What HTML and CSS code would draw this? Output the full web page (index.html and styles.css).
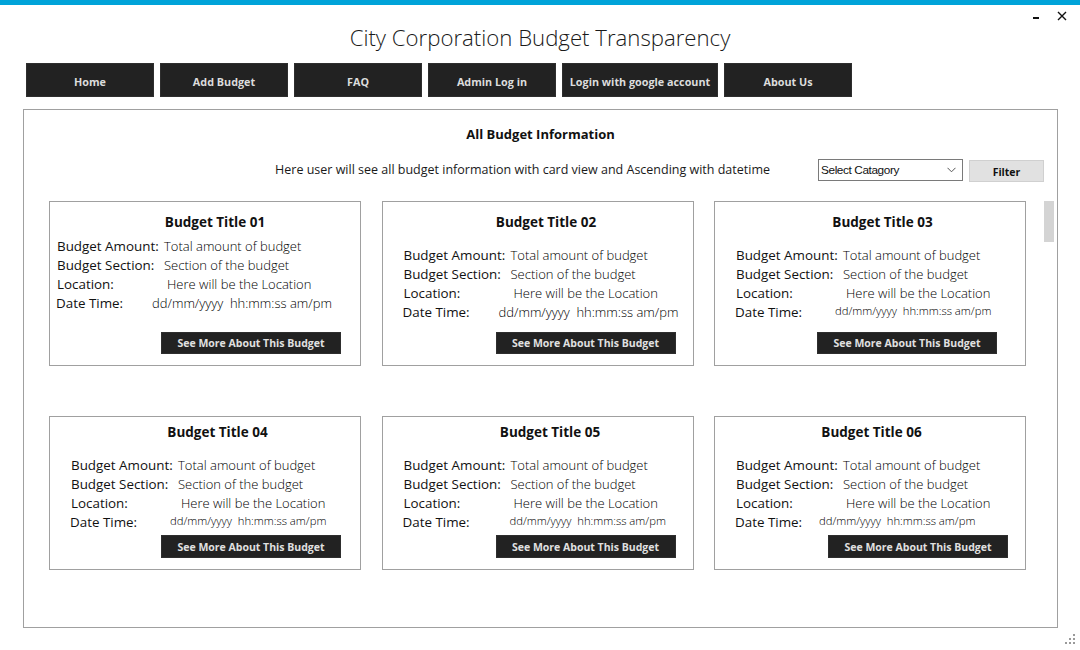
FILE: index.html
```html
<!DOCTYPE html>
<html lang="en">
<head>
<meta charset="utf-8">
<title>City Corporation Budget Transparency</title>
<link rel="stylesheet" href="styles.css">
</head>
<body>
<div class="topbar"></div>
<div class="window-controls">
  <svg class="ctl-min" width="6" height="3" viewBox="0 0 6 3"><rect x="0" y="0" width="6" height="2" fill="#111"/></svg>
  <svg class="ctl-close" width="10" height="10" viewBox="0 0 10 10"><path d="M1 1 L9 9 M9 1 L1 9" stroke="#111" stroke-width="1.4" fill="none"/></svg>
</div>

<header class="app-title">City Corporation Budget Transparency</header>

<nav class="nav">
  <a class="nav-btn">Home</a>
  <a class="nav-btn">Add Budget</a>
  <a class="nav-btn">FAQ</a>
  <a class="nav-btn">Admin Log in</a>
  <a class="nav-btn nav-btn--wide">Login with google account</a>
  <a class="nav-btn">About Us</a>
</nav>

<main class="panel">
  <h2 class="panel-title">All Budget Information</h2>
  <div class="toolbar">
    <p class="toolbar-text">Here user will see all budget information with card view and Ascending with datetime</p>
    <div class="select">
      <span>Select Catagory</span>
      <svg width="9" height="6" viewBox="0 0 9 6"><path d="M0.5 0.8 L4.5 4.8 L8.5 0.8" stroke="#555" stroke-width="1" fill="none"/></svg>
    </div>
    <button class="filter-btn">Filter</button>
  </div>

  <div class="content">
    <div class="cards">
      <section class="card card--1">
        <h3 class="card-title">Budget Title 01</h3>
        <div class="fields">
          <div class="row"><span class="lbl">Budget Amount:</span><span class="val">Total amount of budget</span></div>
          <div class="row"><span class="lbl">Budget Section:</span><span class="val">Section of the budget</span></div>
          <div class="row"><span class="lbl">Location:</span><span class="val val--loc">Here will be the Location</span></div>
          <div class="row"><span class="lbl lbl--d96">Date Time:</span><span class="val">dd/mm/yyyy&nbsp; hh:mm:ss am/pm</span></div>
        </div>
        <button class="more-btn">See More About This Budget</button>
      </section>

      <section class="card card--2">
        <h3 class="card-title">Budget Title 02</h3>
        <div class="fields">
          <div class="row"><span class="lbl">Budget Amount:</span><span class="val">Total amount of budget</span></div>
          <div class="row"><span class="lbl">Budget Section:</span><span class="val">Section of the budget</span></div>
          <div class="row"><span class="lbl">Location:</span><span class="val val--loc">Here will be the Location</span></div>
          <div class="row"><span class="lbl lbl--d96">Date Time:</span><span class="val">dd/mm/yyyy&nbsp; hh:mm:ss am/pm</span></div>
        </div>
        <button class="more-btn">See More About This Budget</button>
      </section>

      <section class="card card--3">
        <h3 class="card-title">Budget Title 03</h3>
        <div class="fields">
          <div class="row"><span class="lbl">Budget Amount:</span><span class="val">Total amount of budget</span></div>
          <div class="row"><span class="lbl">Budget Section:</span><span class="val">Section of the budget</span></div>
          <div class="row"><span class="lbl">Location:</span><span class="val val--loc">Here will be the Location</span></div>
          <div class="row"><span class="lbl lbl--d100">Date Time:</span><span class="val val--small">dd/mm/yyyy&nbsp; hh:mm:ss am/pm</span></div>
        </div>
        <button class="more-btn">See More About This Budget</button>
      </section>

      <section class="card card--4">
        <h3 class="card-title">Budget Title 04</h3>
        <div class="fields">
          <div class="row"><span class="lbl">Budget Amount:</span><span class="val">Total amount of budget</span></div>
          <div class="row"><span class="lbl">Budget Section:</span><span class="val">Section of the budget</span></div>
          <div class="row"><span class="lbl">Location:</span><span class="val val--loc">Here will be the Location</span></div>
          <div class="row"><span class="lbl lbl--d100">Date Time:</span><span class="val val--small">dd/mm/yyyy&nbsp; hh:mm:ss am/pm</span></div>
        </div>
        <button class="more-btn">See More About This Budget</button>
      </section>

      <section class="card card--5">
        <h3 class="card-title">Budget Title 05</h3>
        <div class="fields">
          <div class="row"><span class="lbl">Budget Amount:</span><span class="val">Total amount of budget</span></div>
          <div class="row"><span class="lbl">Budget Section:</span><span class="val">Section of the budget</span></div>
          <div class="row"><span class="lbl">Location:</span><span class="val val--loc">Here will be the Location</span></div>
          <div class="row"><span class="lbl lbl--d107">Date Time:</span><span class="val val--small">dd/mm/yyyy&nbsp; hh:mm:ss am/pm</span></div>
        </div>
        <button class="more-btn">See More About This Budget</button>
      </section>

      <section class="card card--6">
        <h3 class="card-title">Budget Title 06</h3>
        <div class="fields">
          <div class="row"><span class="lbl">Budget Amount:</span><span class="val">Total amount of budget</span></div>
          <div class="row"><span class="lbl">Budget Section:</span><span class="val">Section of the budget</span></div>
          <div class="row"><span class="lbl">Location:</span><span class="val val--loc">Here will be the Location</span></div>
          <div class="row"><span class="lbl lbl--d84">Date Time:</span><span class="val val--small">dd/mm/yyyy&nbsp; hh:mm:ss am/pm</span></div>
        </div>
        <button class="more-btn">See More About This Budget</button>
      </section>
    </div>
    <div class="scrollbar"><div class="scroll-thumb"></div></div>
  </div>
</main>

<svg class="grip" width="12" height="12" viewBox="0 0 12 12">
  <rect x="8" y="0" width="2" height="2" fill="#9a9a9a"/>
  <rect x="4" y="4" width="2" height="2" fill="#9a9a9a"/>
  <rect x="8" y="4" width="2" height="2" fill="#9a9a9a"/>
  <rect x="0" y="8" width="2" height="2" fill="#9a9a9a"/>
  <rect x="4" y="8" width="2" height="2" fill="#9a9a9a"/>
  <rect x="8" y="8" width="2" height="2" fill="#9a9a9a"/>
</svg>
</body>
</html>
```

FILE: styles.css
```css
* { box-sizing: border-box; }

html, body {
  margin: 0;
  padding: 0;
  width: 1080px;
  height: 650px;
  overflow: hidden;
  background: #ffffff;
  font-family: "Open Sans", "Noto Sans", "Liberation Sans", sans-serif;
  color: #111;
}

body { position: relative; }

.topbar {
  height: 5px;
  background: #00a3d9;
}

.window-controls {
  position: absolute;
  top: 11px;
  left: 1033px;
  display: flex;
  align-items: flex-start;
}
.ctl-min { margin-top: 6px; }
.ctl-close { margin-left: 18px; }

.app-title {
  margin: 17px 0 0;
  height: 32px;
  line-height: 32px;
  text-align: center;
  font-size: 22.2px;
  font-weight: 300;
  color: #1a1a1a;
}

.nav {
  display: flex;
  gap: 6px;
  margin: 9px 0 0 26px;
}
.nav-btn {
  width: 128px;
  height: 34px;
  display: flex;
  align-items: center;
  justify-content: center;
  padding-top: 2px;
  background: #222222;
  border: 1px solid #2e2e2e;
  color: #dcdcdc;
  font-size: 10.8px;
  font-weight: 700;
}
.nav-btn--wide { width: 156px; }

.panel {
  margin: 12px 0 0 23px;
  width: 1035px;
  height: 519px;
  border: 1px solid #a0a0a0;
  padding-top: 14px;
}

.panel-title {
  margin: 0;
  height: 20px;
  line-height: 20px;
  text-align: center;
  font-size: 13px;
  font-weight: 700;
  color: #111;
}

.toolbar {
  display: flex;
  justify-content: flex-end;
  align-items: flex-start;
  margin-top: 15px;
  padding-right: 13px;
  height: 23px;
}
.toolbar-text {
  margin: 0 48px 0 0;
  line-height: 21px;
  font-size: 12.5px;
  color: #1a1a1a;
}
.select {
  width: 145px;
  height: 22px;
  border: 1px solid #7a7a7a;
  background: #fff;
  display: flex;
  align-items: center;
  justify-content: space-between;
  padding: 0 6px 1px 2px;
  font-family: "Liberation Sans", Arial, sans-serif;
  font-size: 11.8px;
  letter-spacing: -0.4px;
  color: #111;
}
.filter-btn {
  margin-left: 6px;
  margin-top: 1px;
  width: 75px;
  height: 22px;
  background: #e1e1e1;
  border: 1px solid #d0d0d0;
  font-family: "Open Sans", "Noto Sans", sans-serif;
  font-size: 10.5px;
  font-weight: 700;
  color: #111;
  padding: 2px 0 0;
}

.content {
  display: flex;
  align-items: flex-start;
  margin-top: 19px;
  padding-left: 25px;
}

.cards {
  display: grid;
  grid-template-columns: repeat(3, 312px);
  column-gap: 20.5px;
  row-gap: 50px;
}

.scrollbar {
  margin-left: 18px;
  width: 10px;
}
.scroll-thumb {
  height: 41px;
  background: #d4d4d4;
}

.card {
  height: 165px;
  border: 1px solid #a0a0a0;
  padding-top: 11px;
  padding-left: 21px;
  display: flex;
  flex-direction: column;
  align-items: flex-start;
}
.card--4, .card--5, .card--6 {
  height: 154px;
  padding-top: 6px;
}

.card-title {
  margin: 0 0 0 -21px;
  align-self: stretch;
  height: 18px;
  line-height: 18px;
  text-align: center;
  font-size: 13.5px;
  font-weight: 700;
  color: #111;
}
.card--1 .card-title { margin-left: -7px; padding-left: 20px; }
.card--2 .card-title { padding-left: 17px; }
.card--3 .card-title { padding-left: 25px; }
.card--4 .card-title { padding-left: 25px; }
.card--5 .card-title { padding-left: 25px; }
.card--6 .card-title { padding-left: 3px; }

.fields { margin-top: 14px; }
.card--1 .fields { margin-top: 5px; }
.card--1 { padding-left: 7px; }

.row {
  display: flex;
  align-items: center;
  height: 19px;
  white-space: nowrap;
}
.lbl {
  width: 107px;
  flex: none;
  font-size: 13.4px;
  color: #111;
}
.lbl--d96 { width: 96px; margin-left: -1px; }
.lbl--d100 { width: 100px; margin-left: -1px; }
.lbl--d107 { width: 107px; margin-left: -1px; }
.lbl--d84 { width: 84px; margin-left: -1px; }

.val {
  font-size: 13px;
  font-weight: 300;
  color: #000;
}
.val--loc { padding-left: 3px; }
.val--small { font-size: 11.3px; margin-top: -3px; }

.more-btn {
  margin-top: 20px;
  width: 180px;
  height: 22px;
  background: #222222;
  border: 1px solid #2e2e2e;
  color: #e0e0e0;
  font-family: "Open Sans", "Noto Sans", sans-serif;
  font-size: 10.5px;
  font-weight: 700;
  padding: 0;
}
.card--1 .more-btn { margin-left: 104px; }
.card--2 .more-btn { margin-left: 92px; margin-top: 11px; }
.card--3 .more-btn { margin-left: 81px; margin-top: 11px; }
.card--4 .more-btn { margin-left: 90px; margin-top: 4px; height: 23px; }
.card--5 .more-btn { margin-left: 92px; margin-top: 4px; height: 23px; }
.card--6 .more-btn { margin-left: 92px; margin-top: 4px; height: 23px; }

.grip {
  position: absolute;
  left: 1065px;
  top: 634px;
}
```
